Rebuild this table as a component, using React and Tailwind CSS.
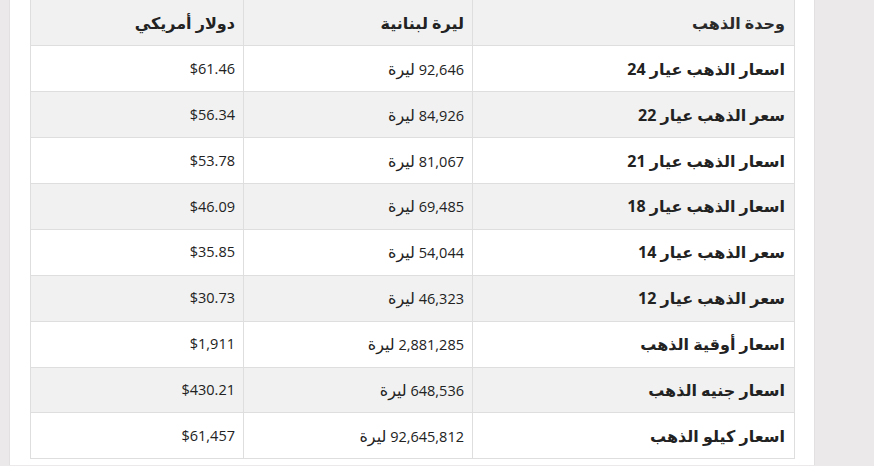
const rows = [
  { name: 'اسعار الذهب عيار 24', lbp: '92,646', usd: '$61.46' },
  { name: 'سعر الذهب عيار 22', lbp: '84,926', usd: '$56.34' },
  { name: 'اسعار الذهب عيار 21', lbp: '81,067', usd: '$53.78' },
  { name: 'اسعار الذهب عيار 18', lbp: '69,485', usd: '$46.09' },
  { name: 'سعر الذهب عيار 14', lbp: '54,044', usd: '$35.85' },
  { name: 'سعر الذهب عيار 12', lbp: '46,323', usd: '$30.73' },
  { name: 'اسعار أوقية الذهب', lbp: '2,881,285', usd: '$1,911' },
  { name: 'اسعار جنيه الذهب', lbp: '648,536', usd: '$430.21' },
  { name: 'اسعار كيلو الذهب', lbp: '92,645,812', usd: '$61,457' },
];

export default function App() {
  return (
    <div className="w-[874px] h-[466px] overflow-hidden bg-[#ebe9ea] font-['Open_Sans','DejaVu_Sans',sans-serif] text-[#222]">
      <div className="ml-[9px] w-[806px] h-full bg-white border-l border-r border-[#e2e0e1] px-[20px]">
        <table dir="rtl" className="w-[764px] -mt-[0.6px] border-collapse table-fixed text-[14.5px]">
          <colgroup>
            <col className="w-[322px]" />
            <col className="w-[229px]" />
            <col className="w-[213px]" />
          </colgroup>
          <thead>
            <tr className="bg-[#f1f1f1] h-[45.9px]">
              <th className="border border-[#dedede] text-right pr-[9px] font-bold text-[16px] text-[#2a2a2a]">وحدة الذهب</th>
              <th className="border border-[#dedede] text-right pr-[8px] font-bold text-[16px]">ليرة لبنانية</th>
              <th className="border border-[#dedede] text-right pr-[8px] font-bold text-[16px]">دولار أمريكي</th>
            </tr>
          </thead>
          <tbody>
            {rows.map((r, i) => (
              <tr key={r.name} className={i % 2 === 1 ? 'bg-[#f1f1f1] h-[45.9px]' : 'bg-white h-[45.9px]'}>
                <td className="border border-[#dedede] text-right pr-[9px] font-bold text-[16px]">{r.name}</td>
                <td className="border border-[#dedede] text-right pr-[8px]">
                  {r.lbp} <span className="text-[16px]">ليرة</span>
                </td>
                <td className="border border-[#dedede] text-right pr-[8px]">{r.usd}</td>
              </tr>
            ))}
          </tbody>
        </table>
      </div>
    </div>
  );
}
